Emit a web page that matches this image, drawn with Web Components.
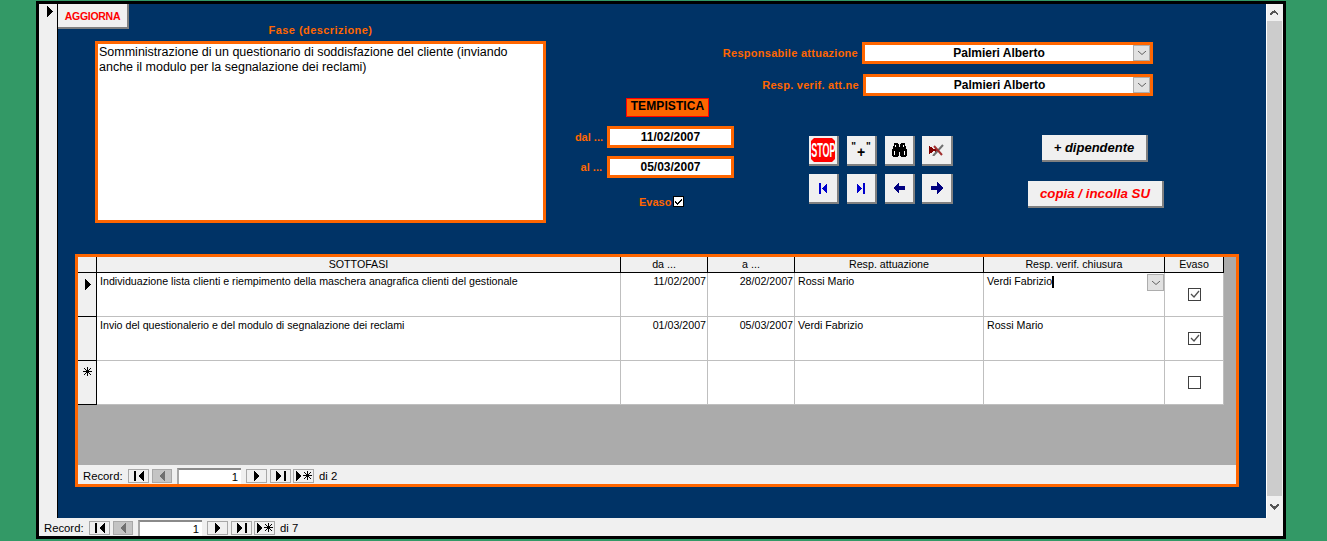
<!DOCTYPE html>
<html lang="it">
<head>
<meta charset="UTF-8">
<title>Fasi</title>
<style>
  html, body { margin: 0; height: 100%; overflow: hidden; }
  body { background: #339966; padding: 1px 0 0 36px; box-sizing: border-box; font: 12px "Liberation Sans", Arial, sans-serif; color: #000; }
  svg { display: block; shape-rendering: crispEdges; }
</style>
</head>
<body>
<x-window>
  <x-form>
    <x-top>
      <x-text-btn slot="save" w="71" h="25" color="#ff0000" size="10.5" spacing="-.3">AGGIORNA</x-text-btn>
      <x-memo slot="memo" label="Fase (descrizione)">Somministrazione di un questionario di soddisfazione del cliente (inviando anche il modulo per la segnalazione dei reclami)</x-memo>

      <x-combo slot="combos" label="Responsabile attuazione" w="291">Palmieri Alberto</x-combo>
      <x-combo slot="combos" label="Resp. verif. att.ne" w="290">Palmieri Alberto</x-combo>

      <x-dates slot="dates"></x-dates>

      <x-tool slot="tools">
        <x-stop>STOP</x-stop>
      </x-tool>
      <x-tool slot="tools"><span style="font:bold 10px/20px 'Liberation Sans',sans-serif;color:#000;display:flex;align-items:flex-start;gap:1px">"<span style="font-size:14px;line-height:22px;padding-top:4px">+</span>"</span></x-tool>
      <x-tool slot="tools">
        <svg width="15" height="14" viewBox="0 0 15 14">
          <path fill="#000" d="M2 0h4v1h1v3h1V1h1V0h4v3h1v3h1v7h-1v1H9v-1H8V9H7v4H6v1H1v-1H0V6h1V3h1z"/>
          <path fill="#fff" d="M2 8h1v4H2zM12 8h1v4h-1zM3 2h1v2H3zM11 2h1v2h-1z"/>
        </svg>
      </x-tool>
      <x-tool slot="tools" w="31">
        <svg width="15" height="12" viewBox="0 0 15 12">
          <path fill="#800000" d="M0 2l7 4-7 4z"/>
          <path fill="#800000" d="M6 4h2v4H6z"/>
          <path fill="none" stroke="#707070" stroke-width="2" d="M4 12L14 1" shape-rendering="auto"/>
          <path fill="none" stroke="#a03030" stroke-width="2" d="M5 2l8 9" shape-rendering="auto"/>
        </svg>
      </x-tool>
      <x-tool slot="tools"><svg width="8" height="11" viewBox="0 0 8 11"><path fill="#0000cc" d="M0 0h2v11H0zM8 0v11L3 5.500z"/></svg></x-tool>
      <x-tool slot="tools"><svg width="8" height="11" viewBox="0 0 8 11"><path fill="#0000cc" d="M6 0h2v11H6zM0 0v11l5-5.500z"/></svg></x-tool>
      <x-tool slot="tools"><svg width="12" height="12" viewBox="0 0 12 12"><path fill="#000080" d="M0 6l6-6v4h6v4H6v4z"/></svg></x-tool>
      <x-tool slot="tools" w="31"><svg width="12" height="12" viewBox="0 0 12 12"><path fill="#000080" d="M12 6L6 0v4H0v4h6v4z"/></svg></x-tool>

      <x-text-btn slot="actions" w="106" h="27" color="#000" size="13" italic style="margin-right:2px">+ dipendente</x-text-btn>
      <x-text-btn slot="actions" w="136" h="27" color="#ff0000" size="13.3" italic>copia / incolla SU</x-text-btn>
    </x-top>
    <x-datasheet></x-datasheet>
  </x-form>
  <x-nav slot="nav" current="1" total="7"></x-nav>
</x-window>

<script>
  // marker arrow and new-record star, used by the selectors
  const ARROW = '<svg width="7" height="11" viewBox="0 0 7 11" style="display:block;shape-rendering:crispEdges"><path fill="#000" d="M0 0h1v1h1v1h1v1h1v1h1v1h1v1H5v1H4v1H3v1H2v1H1v1H0z"/></svg>';
  const STAR = '<svg width="9" height="9" viewBox="0 0 9 9" style="display:block;shape-rendering:crispEdges"><path fill="#000" d="M4 0h1v9H4zM0 4h9v1H0zM1 1h1v1H1zM7 1h1v1H7zM1 7h1v1H1zM7 7h1v1H7zM2 2h1v1H2zM6 2h1v1H6zM2 6h1v1H2zM6 6h1v1H6zM3 3h3v3H3z"/></svg>';

  customElements.define('x-window', class extends HTMLElement {
    constructor() {
      super();
      this.attachShadow({ mode: 'open' }).innerHTML = `
        <style>
          :host { display: grid; width: 1250px; height: 538px; box-sizing: border-box; border: 3px solid #000; background: #f0f0f0;
                  grid-template-columns: 19px 1208px 17px; grid-template-rows: 514px 18px; }
          svg { shape-rendering: crispEdges; }
          .sel { background: #f0f0f0; border-right: 1px solid #000; box-sizing: border-box; padding: 2px 0 0 8px; }
          .bar { display: flex; flex-direction: column; justify-content: space-between; background: #ccc; border-left: 1px solid #fff; border-right: 1px solid #f0f0f0; box-sizing: border-box; }
          .up, .down { background: #f0f0f0; display: flex; justify-content: center; color: #555; }
          .up { height: 17px; align-items: center; }
          .down { height: 22px; align-items: center; }
          .foot { grid-column: 1 / 4; }
        </style>
        <div class="sel">${ARROW}</div>
        <slot></slot>
        <div class="bar">
          <div class="up"><svg width="9" height="6" viewBox="0 0 9 6"><path fill="#555" d="M4 0h1v1h1v1h1v1h1v2H7V4H6V3H3v1H2v1H0V3h1V2h1V1h2z"/></svg></div>
          <div class="down"><svg width="9" height="6" viewBox="0 0 9 6"><path fill="#555" d="M0 0h2v1h1v1h3V1h1V0h2v2H8v1H7v1H6v1H5v1H4V5H3V4H2V3H1V2H0z"/></svg></div>
        </div>
        <div class="foot"><slot name="nav"></slot></div>`;
    }
  });

  customElements.define('x-form', class extends HTMLElement {
    constructor() {
      super();
      this.attachShadow({ mode: 'open' }).innerHTML = `
        <style>
          :host { display: flex; flex-direction: column; background: #003366; height: 514px; }
        </style>
        <slot></slot>`;
    }
  });

  customElements.define('x-top', class extends HTMLElement {
    constructor() {
      super();
      this.attachShadow({ mode: 'open' }).innerHTML = `
        <style>
          :host { display: grid; height: 250px; flex: none; grid-template-columns: 502px 180px 526px; grid-template-rows: 94px 156px; }
          .left { grid-row: 1 / 3; display: flex; flex-direction: column; align-items: flex-start; }
          .combos { grid-column: 2 / 4; display: flex; flex-direction: column; gap: 10px; padding: 38px 113px 0 0; align-items: flex-end; }
          .lower { display: flex; }
          .tools { display: grid; grid-template-columns: 38px 38px 37px 31px; grid-auto-rows: 30px; row-gap: 8px; margin: 38px 0 0 69px; height: 68px; }
          .actions { display: flex; flex-direction: column; align-items: center; gap: 19px; margin: 37px 0 0 75px; width: 136px; }
        </style>
        <div class="left"><slot name="save"></slot><slot name="memo"></slot></div>
        <div class="combos"><slot name="combos"></slot></div>
        <div><slot name="dates"></slot></div>
        <div class="lower">
          <div class="tools"><slot name="tools"></slot></div>
          <div class="actions"><slot name="actions"></slot></div>
        </div>`;
    }
  });

  customElements.define('x-text-btn', class extends HTMLElement {
    constructor() {
      super();
      const w = this.getAttribute('w'), h = this.getAttribute('h');
      const style = this.hasAttribute('italic') ? 'italic' : 'normal';
      this.attachShadow({ mode: 'open' }).innerHTML = `
        <style>
          :host { display: flex; align-items: center; justify-content: center; box-sizing: border-box; flex: none;
                  width: ${w}px; height: ${h}px; background: #f0f0f0; border-right: 2px solid #808080; border-bottom: 2px solid #808080;
                  font: ${style} bold ${this.getAttribute('size')}px "Liberation Sans", Arial, sans-serif; color: ${this.getAttribute('color')};
                  letter-spacing: ${this.getAttribute('spacing') || 0}px; }
        </style>
        <slot></slot>`;
    }
  });

  customElements.define('x-tool', class extends HTMLElement {
    constructor() {
      super();
      this.attachShadow({ mode: 'open' }).innerHTML = `
        <style>
          :host { display: flex; align-items: center; justify-content: center; box-sizing: border-box; width: ${this.getAttribute('w') || 30}px;
                  height: 30px; background: #f0f0f0; border-right: 2px solid #808080; border-bottom: 2px solid #808080; }
        </style>
        <slot></slot>`;
    }
  });

  // red octagon of the exit button, the word is squeezed like the old bitmap
  customElements.define('x-stop', class extends HTMLElement {
    constructor() {
      super();
      this.attachShadow({ mode: 'open' }).innerHTML = `
        <style>
          :host { display: grid; flex: none; width: 24px; height: 24px; grid-template-columns: 24px; grid-template-rows: 24px; place-items: center; overflow: visible; }
          svg, .t { grid-area: 1 / 1; }
          svg { display: block; }
          .t { font: bold 21px/24px "Liberation Sans", Arial, sans-serif; color: #fff; transform: scaleX(.43); white-space: nowrap; justify-self: center; }
        </style>
        <svg width="24" height="24" viewBox="0 0 24 24"><polygon points="3,0 21,0 24,3 24,21 21,24 3,24 0,21 0,3" fill="#ff0000"/></svg>
        <span class="t"><slot></slot></span>`;
    }
  });

  customElements.define('x-memo', class extends HTMLElement {
    constructor() {
      super();
      this.attachShadow({ mode: 'open' }).innerHTML = `
        <style>
          :host { display: block; margin: -5px 0 0 37px; width: 451px; }
          .lab { color: #ff6600; font: bold 11px/12px "Liberation Sans", Arial, sans-serif; letter-spacing: .44px; text-align: center; margin-bottom: 5px; }
          .box { box-sizing: border-box; height: 182px; border: 3px solid #ff6600; background: #fff; padding: 1px 1px; font: 12.5px/15px "Liberation Sans", Arial, sans-serif; color: #000; }
        </style>
        <div class="lab">${this.getAttribute('label')}</div>
        <div class="box"><slot></slot></div>`;
    }
  });

  customElements.define('x-combo', class extends HTMLElement {
    constructor() {
      super();
      this.attachShadow({ mode: 'open' }).innerHTML = `
        <style>
          :host { display: flex; align-items: center; gap: 4px; }
          .lab { color: #ff6600; font: bold 11px "Liberation Sans", Arial, sans-serif; letter-spacing: .27px; white-space: nowrap; }
          .box { box-sizing: border-box; width: ${this.getAttribute('w')}px; height: 22px; border: 3px solid #ff6600; background: #fff; display: flex; }
          .val { flex: 1; text-align: center; font: bold 12px/16px "Liberation Sans", Arial, sans-serif; color: #000; }
          .dd { width: 17px; height: 16px; box-sizing: border-box; border: 1px solid #adadad; background: #e1e1e1; display: flex; align-items: center; justify-content: center; }
        </style>
        <span class="lab">${this.getAttribute('label')}</span>
        <div class="box"><div class="val"><slot></slot></div>
          <div class="dd"><svg width="8" height="4" viewBox="0 0 8 4"><path fill="none" stroke="#606060" d="M0 0l4 3.500L8 0"/></svg></div>
        </div>`;
    }
  });

  customElements.define('x-dates', class extends HTMLElement {
    constructor() {
      super();
      this.attachShadow({ mode: 'open' }).innerHTML = `
        <style>
          :host { display: flex; flex-direction: column; align-items: flex-start; font: bold 11px "Liberation Sans", Arial, sans-serif; }
          svg { shape-rendering: crispEdges; display: block; }
          .title { box-sizing: border-box; margin-left: 66px; width: 83px; height: 19px; background: #ff6600; border: 1px solid #ff0000; color: #000; text-align: center;
                   font: bold 12px/15px "Liberation Sans", Arial, sans-serif; letter-spacing: .1px; }
          .row { display: flex; align-items: center; gap: 4px; height: 22px; }
          .lab { width: 43px; text-align: right; color: #ff6600; }
          .val { box-sizing: border-box; width: 127px; height: 22px; border: 3px solid #ff6600; background: #fff; color: #000; text-align: center; font: bold 12px/16px "Liberation Sans", Arial, sans-serif; }
          .ev { display: flex; align-items: center; gap: 2px; margin: 18px 0 0 79px; color: #ff6600; height: 11px; }
          .ck { box-sizing: border-box; width: 11px; height: 11px; background: #fff; border: 1px solid #000; }
        </style>
        <div class="title">TEMPISTICA</div>
        <div class="row" style="margin-top:9px"><span class="lab">dal ...</span><div class="val">11/02/2007</div></div>
        <div class="row" style="margin-top:8px"><span class="lab" style="width:42px;margin-right:1px">al ...</span><div class="val">05/03/2007</div></div>
        <div class="ev"><span>Evaso</span>
          <div class="ck"><svg width="9" height="9" viewBox="0 0 9 9"><path fill="#000" d="M1 4h1v1h1v1h1V5h1V4h1V3h1V2h1v2H7v1H6v1H5v1H4v1H3V7H2V6H1z"/></svg></div>
        </div>`;
    }
  });

  customElements.define('x-nav', class extends HTMLElement {
    constructor() {
      super();
      const btn = (w, cls, d, vw) => `<div class="b ${cls}" style="width:${w}px"><svg width="${vw}" height="10" viewBox="0 0 ${vw} 10">${d}</svg></div>`;
      const tri = 'v10h1v-1h1v-1h1v-1h1v-1h1v-2h-1v-1h-1v-1h-1v-1h-1v-1z';
      const triL = 'v10h-1v-1h-1v-1h-1v-1h-1v-1h-1v-2h1v-1h1v-1h1v-1h1v-1z';
      this.attachShadow({ mode: 'open' }).innerHTML = `
        <style>
          :host { display: flex; align-items: flex-end; height: 100%; box-sizing: border-box; padding-left: 5px; background: #f0f0f0;
                  font: 11.3px "Liberation Sans", Arial, sans-serif; color: #000; }
          svg { display: block; shape-rendering: crispEdges; }
          .lab { width: 45px; margin-bottom: 1px; line-height: 14px; white-space: nowrap; }
          .b { box-sizing: border-box; height: 14px; margin-bottom: 1px; border: 1px solid #a8a8a8; background: #f0f0f0; display: flex; align-items: center; justify-content: center; }
          .off { background: #c4c4c4; }
          .inp { box-sizing: border-box; width: 64px; height: 16px; margin: 0 5px; background: #fff; border-top: 2px solid #8a8a8a; border-left: 2px solid #a8a8a8; text-align: right; padding-right: 3px; line-height: 15px; }
          .total { margin: 0 0 1px 5px; line-height: 14px; }
        </style>
        <span class="lab">Record:</span>
        ${btn(21, '', `<path fill="#000" d="M0 0h2v10H0zM10 0${triL}"/>`, 10)}
        <div style="width:3px"></div>
        ${btn(20, 'off', `<path fill="#707070" d="M6 0${triL}"/>`, 6)}
        <div class="inp">${this.getAttribute('current')}</div>
        ${btn(21, '', `<path fill="#000" d="M0 0${tri}"/>`, 6)}
        <div style="width:3px"></div>
        ${btn(21, '', `<path fill="#000" d="M8 0h2v10H8zM0 0${tri}"/>`, 10)}
        <div style="width:2px"></div>
        ${btn(21, '', `<path fill="#000" d="M0 0${tri}M11 0h1v9h-1zM7 4h9v1H7zM8 1h1v1H8zM14 1h1v1h-1zM8 7h1v1H8zM14 7h1v1h-1zM9 2h1v1H9zM13 2h1v1h-1zM9 6h1v1H9zM13 6h1v1h-1zM10 3h3v3h-3z"/>`, 16)}
        <span class="total">di ${this.getAttribute('total')}</span>`;
    }
  });

  customElements.define('x-datasheet', class extends HTMLElement {
    constructor() {
      super();
      const heads = ['SOTTOFASI', 'da ...', 'a ...', 'Resp. attuazione', 'Resp. verif. chiusura', 'Evaso'];
      const rows = [
        ['Individuazione lista clienti e riempimento della maschera anagrafica clienti del gestionale', '11/02/2007', '28/02/2007', 'Rossi Mario', 'Verdi Fabrizio', true],
        ['Invio del questionalerio e del modulo di segnalazione dei reclami', '01/03/2007', '05/03/2007', 'Verdi Fabrizio', 'Rossi Mario', true],
        ['', '', '', '', '', false]
      ];
      const check = on => `<div class="cb">${on ? '<svg width="11" height="11" viewBox="0 0 11 11"><path fill="none" stroke="#505050" stroke-width="1.3" d="M2 5l3 3 5-6"/></svg>' : ''}</div>`;
      let body = '';
      rows.forEach((r, i) => {
        body += `<div class="sel ${i == 2 ? 'new' : ''}">${i == 0 ? ARROW : i == 2 ? STAR : ''}</div>`;
        body += `<div class="c">${r[0]}</div><div class="c num">${r[1]}</div><div class="c num">${r[2]}</div><div class="c">${r[3]}</div>`;
        body += `<div class="c cur">${r[4]}${i == 0 ? '<span class="caret"></span><div class="dd"><svg width="8" height="4" viewBox="0 0 8 4"><path fill="none" stroke="#606060" d="M0 0l4 3.500L8 0"/></svg></div>' : ''}</div>`;
        body += `<div class="c ck">${check(r[5])}</div>`;
      });
      this.attachShadow({ mode: 'open' }).innerHTML = `
        <style>
          :host { display: flex; flex-direction: column; box-sizing: border-box; flex: none; width: 1164px; height: 233px; margin-left: 17px; border: 3px solid #ff6600; background: #ababab; }
          .grid { display: grid; width: 1146px; grid-template-columns: 19px 524px 87px 87px 189px 181px 59px; grid-template-rows: 16px 44px 44px 44px; font: 10.67px/12px "Liberation Sans", Arial, sans-serif; color: #000; }
          .h, .sel { box-sizing: border-box; background: #f0f0f0; border-right: 1px solid #000; border-bottom: 1px solid #000; }
          .h { text-align: center; line-height: 15px; }
          .sel { padding: 6px 0 0 7px; }
          .new { padding-left: 5px; }
          .c { box-sizing: border-box; background: #fff; border-right: 1px solid #bfbfbf; border-bottom: 1px solid #bfbfbf; padding: 2px 3px; position: relative; white-space: nowrap; }
          .num { text-align: right; padding-right: 1px; }
          .caret { display: inline-block; width: 2px; height: 12px; background: #000; vertical-align: -3px; }
          .dd { position: absolute; right: 0; top: 1px; width: 17px; height: 17px; box-sizing: border-box; border: 1px solid #adadad; background: #e1e1e1; display: flex; align-items: center; justify-content: center; }
          .ck { padding: 15px 0 0 23px; }
          .cb { box-sizing: border-box; width: 13px; height: 13px; border: 1px solid #404040; background: #fff; }
          .gap { flex: 1; }
        </style>
        <div class="grid">
          <div class="sel" style="padding:0"></div>
          ${heads.map(h => `<div class="h">${h}</div>`).join('')}
          ${body}
        </div>
        <div class="gap"></div>
        <div style="height:19px;flex:none"><x-nav current="1" total="2"></x-nav></div>`;
    }
  });
</script>
</body>
</html>
